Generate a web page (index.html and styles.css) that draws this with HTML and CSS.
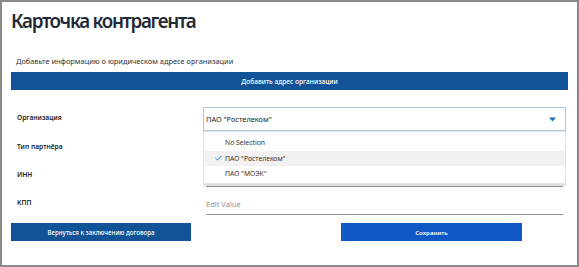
FILE: index.html
```html
<!DOCTYPE html>
<html lang="ru">
  <head>
    <meta charset="UTF-8" />
    <meta name="viewport" content="width=device-width, initial-scale=1.0" />
    <title>Карточка контрагента</title>
    <link rel="stylesheet" href="styles.css">
  </head>
  <body>
    <div class="card">
      <h1 class="title">Карточка контрагента</h1>
      <p class="hint">Добавьте информацию о юридическом адресе организации</p>
      <button class="btn btn-wide">Добавить адрес организации</button>

      <div class="form">
        <div class="label label-top">Организация</div>
        <div class="field">
          <div class="select">
            <span>ПАО "Ростелеком"</span>
            <svg class="arrow" width="7" height="5" viewBox="0 0 7 5">
              <path d="M0 0.5 H7 L3.5 4.5 Z" fill="#1b6fb5" />
            </svg>
          </div>
          <ul class="menu">
            <li class="option">No Selection</li>
            <li class="option selected">
              <svg class="check" width="7" height="6" viewBox="0 0 7 6">
                <path d="M0.5 3.2 L2.5 5 L6.5 0.8" fill="none" stroke="#2a7fd4" stroke-width="1" />
              </svg>
              ПАО "Ростелеком"
            </li>
            <li class="option">ПАО "МОЭК"</li>
          </ul>
        </div>

        <div class="label">Тип партнёра</div>
        <div class="field"><div class="input"></div></div>

        <div class="label">ИНН</div>
        <div class="field"><div class="input"></div></div>

        <div class="label">КПП</div>
        <div class="field"><div class="input placeholder">Edit Value</div></div>
      </div>

      <div class="actions">
        <button class="btn btn-back">Вернуться к заключению договора</button>
        <button class="btn btn-save">Сохранить</button>
      </div>
    </div>
  </body>
</html>
```

FILE: styles.css
```css
body {
  margin: 0;
  font-family: "Noto Sans", "Open Sans", sans-serif;
  background-color: white;
}

.card {
  box-sizing: border-box;
  width: 579px;
  height: 267px;
  border: 2px solid #8a8a8a;
  padding: 0 11px 0 9px;
}

.title {
  margin: 4px 0 0 0;
  font-size: 18.8px;
  font-weight: 600;
  letter-spacing: -1.3px;
  line-height: 30px;
  color: #1f2a36;
}

.hint {
  margin: 19px 0 0 5px;
  font-size: 7.4px;
  line-height: 12px;
  color: #333;
}

.btn {
  display: block;
  height: 18px;
  border: none;
  padding: 0;
  color: white;
  font-family: inherit;
  font-weight: 500;
  cursor: pointer;
}

.btn-wide {
  width: 557px;
  margin-top: 5px;
  background-color: #115396;
  font-size: 6.6px;
}

.form {
  display: grid;
  grid-template-columns: 186px 363px;
  grid-template-rows: 24px repeat(3, 28px);
  margin: 17px 0 0 6px;
}

.form .label {
  font-size: 6.7px;
  font-weight: 600;
  line-height: 11px;
  color: #222;
  padding-top: 10px;
}

.form .label-top {
  padding-top: 5px;
}

.field {
  position: relative;
}

.select {
  box-sizing: border-box;
  height: 24px;
  border: 1px solid #a9c9e2;
  display: flex;
  align-items: center;
  justify-content: space-between;
  padding: 0 9px 0 2px;
  font-size: 7.4px;
  color: #222;
}

.input {
  box-sizing: border-box;
  height: 28px;
  margin: 0 3px;
  border-bottom: 1px solid #8f8f8f;
  padding-top: 12px;
}

.placeholder {
  color: #8f8f8f;
  font-size: 7.5px;
  line-height: 11px;
}

.menu {
  position: absolute;
  top: 24px;
  left: 0;
  right: 0;
  margin: 0;
  padding: 3px 0 1px;
  list-style: none;
  background-color: white;
  border: 1px solid #e4e4e4;
  box-shadow: 0 2px 0 #e0e0e0;
  z-index: 1;
}

.option {
  height: 15.5px;
  display: flex;
  align-items: center;
  padding-left: 21px;
  font-size: 6.8px;
  color: #333;
}

.option.selected {
  position: relative;
  background-color: #f1f1f1;
}

.check {
  position: absolute;
  left: 11px;
}

.actions {
  display: flex;
  gap: 150px;
  margin-top: 8px;
}

.btn-back {
  width: 180px;
  background-color: #115396;
  font-size: 6.2px;
}

.btn-save {
  width: 181px;
  background-color: #1158c7;
  font-size: 6.1px;
  font-weight: 600;
}
```
